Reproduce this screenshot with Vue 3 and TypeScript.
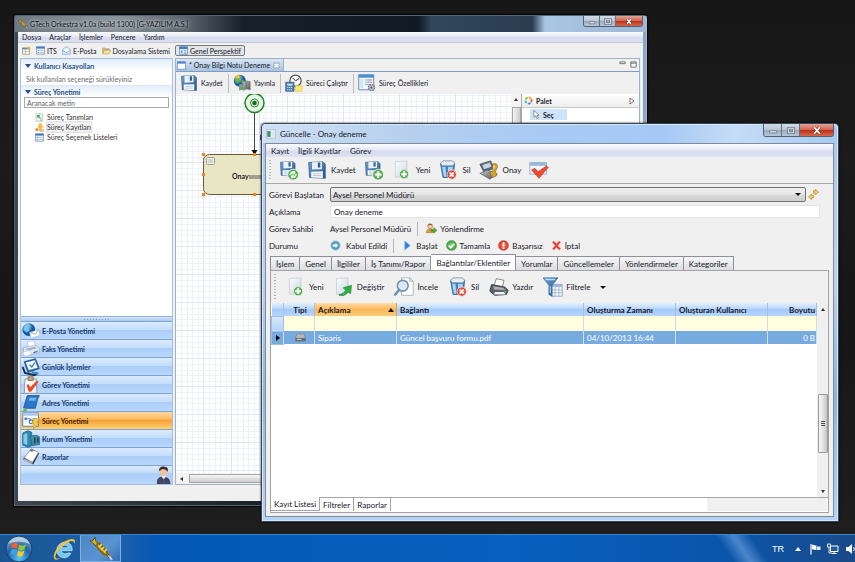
<script setup lang="ts">
import { ref } from 'vue'

interface Item {
  id: string
  label: string
  icon: string
}

const mainMenu: string[] = ['Dosya', 'Araçlar', 'İşlemler', 'Pencere', 'Yardım']
const perspectives: Item[] = [
  { id: 'its', label: 'ITS', icon: 'view' },
  { id: 'mail', label: 'E-Posta', icon: 'mail' },
  { id: 'files', label: 'Dosyalama Sistemi', icon: 'folder' },
]
const processTree: Item[] = [
  { id: 'defs', label: 'Süreç Tanımları', icon: 'definition' },
  { id: 'records', label: 'Süreç Kayıtları', icon: 'records' },
  { id: 'lists', label: 'Süreç Seçenek Listeleri', icon: 'view' },
]
const modules: Item[] = [
  { id: 'mail', label: 'E-Posta Yönetimi', icon: 'globemail' },
  { id: 'fax', label: 'Faks Yönetimi', icon: 'fax' },
  { id: 'daily', label: 'Günlük İşlemler', icon: 'daily' },
  { id: 'task', label: 'Görev Yönetimi', icon: 'task' },
  { id: 'address', label: 'Adres Yönetimi', icon: 'book' },
  { id: 'process', label: 'Süreç Yönetimi', icon: 'process' },
  { id: 'company', label: 'Kurum Yönetimi', icon: 'building' },
  { id: 'reports', label: 'Raporlar', icon: 'reports' },
]
const editorTools: Item[] = [
  { id: 'save', label: 'Kaydet', icon: 'save' },
  { id: 'publish', label: 'Yayınla', icon: 'publish' },
  { id: 'run', label: 'Süreci Çalıştır', icon: 'clock' },
  { id: 'props', label: 'Süreç Özellikleri', icon: 'tablegear' },
]
const dialogMenu: string[] = ['Kayıt', 'İlgili Kayıtlar', 'Görev']
const statusActions: Item[] = [
  { id: 'start', label: 'Başlat', icon: 'play' },
  { id: 'done', label: 'Tamamla', icon: 'ok' },
  { id: 'fail', label: 'Başarısız', icon: 'alert' },
  { id: 'cancel', label: 'İptal', icon: 'cross' },
]
const tabs: string[] = [
  'İşlem', 'Genel', 'İlgililer', 'İş Tanımı/Rapor', 'Bağlantılar/Eklentiler',
  'Yorumlar', 'Güncellemeler', 'Yönlendirmeler', 'Kategoriler',
]
const attachmentTools: Item[] = [
  { id: 'new', label: 'Yeni', icon: 'pageplus' },
  { id: 'edit', label: 'Değiştir', icon: 'pageedit' },
  { id: 'view', label: 'İncele', icon: 'magnifier' },
  { id: 'delete', label: 'Sil', icon: 'bin' },
  { id: 'print', label: 'Yazdır', icon: 'printer' },
  { id: 'filter', label: 'Filtrele', icon: 'filter' },
]
const bottomTabs: string[] = ['Kayıt Listesi', 'Filtreler', 'Raporlar']

const activeModule = ref('process')
const activeTab = ref('Bağlantılar/Eklentiler')
const activeBottom = ref('Kayıt Listesi')
const search = ref('')
const owner = ref('Aysel Personel Müdürü')
const description = ref('Onay deneme')
</script>

<template>
  <div class="screen">
    <svg class="sprite" aria-hidden="true">
      <defs>
        <linearGradient id="g-blue" x1="0" y1="0" x2="1" y2="1">
          <stop offset="0" stop-color="#6fa0d0" /><stop offset="1" stop-color="#24538c" />
        </linearGradient>
        <linearGradient id="g-paper" x1="0" y1="0" x2="1" y2="1">
          <stop offset="0" stop-color="#fdfeff" /><stop offset="1" stop-color="#c9d5e0" />
        </linearGradient>
        <linearGradient id="g-metal" x1="0" y1="0" x2="1" y2="1">
          <stop offset="0" stop-color="#c4c8cc" /><stop offset="1" stop-color="#4c5258" />
        </linearGradient>
        <radialGradient id="g-green"><stop offset="0" stop-color="#8be07c" /><stop offset="1" stop-color="#3a9b3c" /></radialGradient>
        <radialGradient id="g-red"><stop offset="0" stop-color="#ff8a72" /><stop offset="1" stop-color="#d22c1c" /></radialGradient>
        <radialGradient id="g-globe" cx=".35" cy=".3"><stop offset="0" stop-color="#a6e2ff" /><stop offset="1" stop-color="#0c5599" /></radialGradient>
        <radialGradient id="g-orb" cx=".5" cy=".85" r=".9"><stop offset="0" stop-color="#56c8f5" /><stop offset=".5" stop-color="#1c62a8" /><stop offset="1" stop-color="#a4bdd6" /></radialGradient>
      </defs>

      <symbol id="save" viewBox="0 0 24 24">
        <path d="M2 3 19 2l3 3v17L3 21z" fill="url(#g-blue)" stroke="#2c5687" stroke-width=".8" />
        <path d="M6 2.600 18 2v9L6 11.500z" fill="#e9f0f7" /><path d="M13 3h3v6h-3z" fill="#35608f" />
        <path d="M5 14l14-.4v8L5 21z" fill="#f6f9fc" /><path d="M7 16.500h10M7 18.800h10" stroke="#a8bccf" />
      </symbol>
      <symbol id="saverefresh" viewBox="0 0 24 24">
        <use href="#save" width="21" height="21" /><circle cx="17" cy="17.500" r="6.500" fill="url(#g-green)" stroke="#fff" />
        <path d="M13.500 18a3.600 3.600 0 0 1 6-2.700M20.500 17a3.600 3.600 0 0 1-6 2.900" fill="none" stroke="#fff" stroke-width="1.700" />
        <path d="M19 12.800v3.600h-3.600zM14.500 22.200v-3.600h3.600z" fill="#fff" />
      </symbol>
      <symbol id="saveplus" viewBox="0 0 24 24">
        <use href="#save" width="21" height="21" /><circle cx="17" cy="17.500" r="6.500" fill="url(#g-green)" stroke="#fff" />
        <path d="M17 13.500v8M13 17.500h8" stroke="#fff" stroke-width="2.400" />
      </symbol>
      <symbol id="pageplus" viewBox="0 0 24 24">
        <path d="M4 2 18 1v18L4 21z" fill="url(#g-paper)" stroke="#b7c3ce" stroke-width=".7" />
        <circle cx="14.500" cy="17" r="5.500" fill="url(#g-green)" stroke="#e9f7e6" /><path d="M14.500 13.500v7M11 17h7" stroke="#fff" stroke-width="2.400" />
      </symbol>
      <symbol id="pageedit" viewBox="0 0 24 24">
        <path d="M3 2 17 1v18L3 21z" fill="url(#g-paper)" stroke="#b7c3ce" stroke-width=".7" />
        <path d="M6 21c4 0 6-2 8-5l-3-3 10-3-1 10-3-2c-3 4-6 5-11 4z" fill="#2fae49" stroke="#1b8433" stroke-width=".7" />
      </symbol>
      <symbol id="bin" viewBox="0 0 24 24">
        <path d="M3 4h17l-2 17H6z" fill="#3f83c6" stroke="#3a6696" /><path d="M5 8h4l1 12H7zM12 8h6l-2 11h-4z" fill="#a8d3f2" />
        <path d="M3 4l3-3h11l3 3-2 3H5z" fill="#e6edf3" stroke="#62788d" stroke-width=".8" />
        <circle cx="16.500" cy="17.500" r="5.500" fill="url(#g-red)" stroke="#ffdfd8" /><path d="M14 15l5 5M19 15l-5 5" stroke="#fff" stroke-width="2" />
      </symbol>
      <symbol id="stamp" viewBox="0 0 24 24">
        <path d="M1 5 14 1l4 9-12 5z" fill="#56687a" stroke="#37434f" stroke-width=".7" /><path d="M4 6 13 3l2 5-9 3z" fill="#c7d4e1" />
        <path d="M1 16l9-4 12 5-9 6z" fill="url(#g-metal)" stroke="#50565d" stroke-width=".7" />
        <path d="M16 5c4-2 7 0 6 4l-2 4 1 6-5 2-3-5 4-4z" fill="#d2a332" stroke="#80611c" stroke-width=".7" /><path d="M17 7c1-1 3 0 2 2l-2 3z" fill="#f7df8f" />
      </symbol>
      <symbol id="approve" viewBox="0 0 24 24">
        <path d="M1 3h20v14H1z" fill="#f4f7fb" stroke="#8ea5c4" /><path d="M1 3h20v4H1z" fill="#9db9df" />
        <path d="M3 12l4-2 4 4 10-7 2 2-11 13z" fill="#ee4b30" stroke="#c2321d" stroke-width=".7" />
      </symbol>
      <symbol id="magnifier" viewBox="0 0 24 24">
        <path d="M9 1h10l4 4v17H9z" fill="#fff" stroke="#8d9aa8" stroke-width=".8" /><path d="M19 1v4h4" fill="none" stroke="#8d9aa8" />
        <circle cx="10.500" cy="10.500" r="6.500" fill="#d3ebfd" stroke="#7f93a6" stroke-width="2" /><path d="M6 15.500 1.500 21" stroke="#6d8db5" stroke-width="3" stroke-linecap="round" />
      </symbol>
      <symbol id="printer" viewBox="0 0 24 24">
        <path d="M9 2l9 2-2 8-10-2z" fill="#fff" stroke="#6b7279" /><path d="M3 9l16 3 4 4-2 5-14 1-6-5z" fill="#5b6167" stroke="#33383d" />
        <path d="M5 11l12 2 3 3-14-1z" fill="#a8aeb4" /><path d="M7 18h11l2 3H6z" fill="#eef1f4" /><circle cx="19.500" cy="18" r="1.200" fill="#53c14d" />
      </symbol>
      <symbol id="filter" viewBox="0 0 24 24">
        <path d="M10 9h13v14H10z" fill="#fff" stroke="#7896bd" /><path d="M10 9h13v3H10z" fill="#9bb9e2" /><path d="M10 15.500h13M10 19h13M14.500 12v11M19 12v11" stroke="#93abc9" />
        <path d="M0 1h18l-7 9v13l-4-2V10z" fill="url(#g-blue)" stroke="#2a66a5" stroke-width=".7" /><path d="M2 2h13l-1 2H4z" fill="#b9def8" /><path d="M8 11h1.500v9L8 19z" fill="#9fd0f4" />
      </symbol>
      <symbol id="publish" viewBox="0 0 24 24">
        <circle cx="9" cy="9" r="8" fill="url(#g-globe)" /><path d="M3 5c3-4 7-3 8-1l-3 3 1 3-3 3-3-4zM12 8l4 1-2 5-3-2z" fill="#6db335" /><path d="M2 3l5-2 3 3-4 3z" fill="#f4bf32" />
        <path d="M13 11l4-2 1 11-4 2zM17 9l6 1v11l-5-1z" fill="url(#g-metal)" stroke="#5a6065" stroke-width=".5" /><path d="M8 14l5-1v8l-5 1z" fill="#8d9499" /><circle cx="12" cy="19" r="2" fill="#4bb13f" />
      </symbol>
      <symbol id="clock" viewBox="0 0 24 24">
        <circle cx="14" cy="9" r="7.500" fill="#fbfbf9" stroke="#4e4e4e" stroke-width="1.600" /><path d="M10 5l4 4 5-3" fill="none" stroke="#333" stroke-width="1.300" />
        <path d="M14 15l9 1-1 8-8-1z" fill="#f6e96a" stroke="#d0bc35" stroke-width=".6" /><path d="M1 11h11v12H1z" fill="#5381b3" stroke="#345b88" /><path d="M3 13h7v2.500H3z" fill="#cfe6f7" /><path d="M3 18h7M3 21h7" stroke="#d9e7f5" stroke-dasharray="1.500 1" stroke-width="1.500" />
      </symbol>
      <symbol id="tablegear" viewBox="0 0 24 24">
        <path d="M1 1h20v20H1z" fill="#f7fbff" stroke="#4c83bd" stroke-width="1.200" /><path d="M1 1h20v4H1z" fill="#4c8fd4" />
        <path d="M3 7h4v12H3z" fill="#cfe2f6" /><path d="M9 8h10M9 11h10M9 14h8" stroke="#85b0de" stroke-width="1.500" /><path d="M13 8h5M13 11h5" stroke="#f08a70" stroke-width="1.500" stroke-dasharray="2 1" />
        <circle cx="18" cy="18" r="4" fill="#bfc3c7" stroke="#777c81" stroke-width="2" stroke-dasharray="2 1.100" /><circle cx="18" cy="18" r="1.500" fill="#5f656a" />
      </symbol>
      <symbol id="view" viewBox="0 0 24 24">
        <path d="M1 2h22v20H1z" fill="#f8fbff" stroke="#56729c" stroke-width="1.600" /><path d="M1 2h22v5H1z" fill="#3f78c4" /><path d="M4 10h5v3H4zM4 16h5v3H4z" fill="#6f9cd8" /><path d="M11 11.500h10M11 17.500h10" stroke="#8aa4c8" stroke-width="2" />
      </symbol>
      <symbol id="blank" viewBox="0 0 24 24">
        <path d="M1 2h22v20H1z" fill="#fff" stroke="#5583bd" stroke-width="2" /><path d="M1 2h22v5H1z" fill="#4a86d2" />
      </symbol>
      <symbol id="newview" viewBox="0 0 24 24">
        <path d="M1 5h19v17H1z" fill="#fffdf4" stroke="#7d7252" stroke-width="1.600" /><path d="M1 5h19v4H1z" fill="#5c86bd" /><path d="M9 9v13M1 15h19" stroke="#9a9587" stroke-width="1.400" /><path d="M18 1v9M13.500 5.500h9" stroke="#e7b127" stroke-width="3" />
      </symbol>
      <symbol id="mail" viewBox="0 0 24 24">
        <path d="M1 10 12 1l11 9v12H1z" fill="#d5e7fa" stroke="#5a91cf" stroke-width="1.400" /><path d="M5 6h14v8l-7 4-7-4z" fill="#fff" stroke="#a2bfdf" /><path d="M1 11l11 7 11-7" fill="none" stroke="#5a91cf" stroke-width="1.500" />
      </symbol>
      <symbol id="folder" viewBox="0 0 24 24">
        <path d="M1 5h7l2 2h9v4H7L2 20z" fill="#e8bf58" stroke="#a4822f" /><path d="M9 8h11v6H9z" fill="#7fb0e6" /><path d="M6 11h17l-4 10H2z" fill="#fbe596" stroke="#a4822f" stroke-width="1.200" />
      </symbol>
      <symbol id="definition" viewBox="0 0 24 24">
        <path d="M3 2h17v20H3z" fill="#f5fbf5" stroke="#8aa598" stroke-width="1.400" /><path d="M6 5v9l3-3 5 5 2-2-5-5 3-4z" fill="#2d9c4b" /><path d="M13 19h5" stroke="#7c8fa8" stroke-width="2" />
      </symbol>
      <symbol id="records" viewBox="0 0 24 24">
        <circle cx="5" cy="17" r="4" fill="#ef7c42" /><path d="M12 1l7 2-3 6h6L11 20l2-8H8z" fill="#fbc62f" stroke="#cc8c16" /><path d="M13 17h10v6H13z" fill="#f0d37c" stroke="#b58c2c" />
      </symbol>
      <symbol id="processsmall" viewBox="0 0 24 24">
        <path d="M1 2h22v20H1z" fill="#d8e9fa" stroke="#3c6ba4" stroke-width="1.600" /><path d="M1 2h22v6H1z" fill="#3d7ac6" /><path d="M5 12h4v6H5zM14 11h5v3h-5zM14 17h5v3h-5z" fill="#5e8dc7" />
      </symbol>
      <symbol id="globemail" viewBox="0 0 24 24">
        <circle cx="9" cy="10" r="8.500" fill="url(#g-globe)" /><path d="M4 5c3-3 6-2 7 0L8 8l2 3-4 3-4-4z" fill="#7cc7e8" /><path d="M10 14l12-4 2 8-12 4z" fill="#f7f8fa" stroke="#9aa6b3" stroke-width=".7" /><path d="M10 14l8 2 4-6" fill="none" stroke="#9aa6b3" />
      </symbol>
      <symbol id="fax" viewBox="0 0 24 24">
        <path d="M7 2l9-1 2 8-9 2z" fill="#fff" stroke="#a6b1be" stroke-width=".7" /><path d="M2 10l16-3 5 4v6L8 21l-6-4z" fill="#e3e9f1" stroke="#8d9bb0" stroke-width=".7" /><path d="M4 12l13-3 3 2-11 3z" fill="#9fb0c6" /><path d="M0 17l9-3 4 5-8 3z" fill="#fff" stroke="#a6b1be" stroke-width=".7" /><path d="M15 16l6-2v2l-6 2z" fill="#4b78b8" />
      </symbol>
      <symbol id="daily" viewBox="0 0 24 24">
        <path d="M3 5 18 1l5 13-15 5z" fill="#2b6fbb" stroke="#173f70" /><path d="M5 6 17 3l4 10-12 3z" fill="#f7fafe" /><path d="M10 9l3 3 4-6" fill="none" stroke="#3779c2" stroke-width="1.800" /><path d="M1 12l3 8 13 3 3-3" fill="none" stroke="#182c47" stroke-width="2.500" /><path d="M13 19l9 2" stroke="#2f89d9" stroke-width="3" />
      </symbol>
      <symbol id="task" viewBox="0 0 24 24">
        <path d="M4 4h15l1 19H3z" fill="#fafafa" stroke="#8293a8" stroke-width="1.200" /><path d="M8 1h7v5H8z" fill="#c5a77a" stroke="#7c6340" /><path d="M6 12l3-1 2 4 9-9 2 2-10 13H9z" fill="#e84d2b" />
      </symbol>
      <symbol id="book" viewBox="0 0 24 24">
        <path d="M7 2h16l-5 17H2z" fill="#2b78cb" stroke="#174a87" /><path d="M2 19l1 3h16l4-17" fill="none" stroke="#c7d9ea" stroke-width="2" /><path d="M10 5h9l-1 4H9z" fill="#78b3ea" /><circle cx="4" cy="21" r="2.500" fill="#5fbd3f" />
      </symbol>
      <symbol id="process" viewBox="0 0 24 24">
        <path d="M1 1h21v18H1z" fill="#f6f9fe" stroke="#4f7fbb" stroke-width="1.200" /><path d="M1 1h21v4H1z" fill="#aac9ee" /><circle cx="5" cy="9" r="2" fill="#6287ba" /><circle cx="12" cy="13" r="2.500" fill="none" stroke="#426fac" stroke-width="1.400" /><path d="M7 9h4v3M14 9h5" stroke="#426fac" fill="none" /><path d="M16 9h7l-3 5h3l-8 9 1-7h-3z" fill="#f9c83c" stroke="#bf8f1e" stroke-width=".7" />
      </symbol>
      <symbol id="building" viewBox="0 0 24 24">
        <path d="M1 4l7-3 5 2v18l-5 2-7-3z" fill="#2d89b4" stroke="#1b5a7d" /><path d="M2 6l5-2v16l-5-2z" fill="#86cbe0" /><path d="M11 8l9-1 4 3v9l-10 2z" fill="#458fae" stroke="#285d77" /><path d="M16 10h2v8h-2zM20 10h2v7h-2z" fill="#1f4056" />
      </symbol>
      <symbol id="reports" viewBox="0 0 24 24">
        <path d="M1 15 12 3l11 4-8 15z" fill="#30353b" /><path d="M3 13 12 1l10 5-8 13z" fill="#fff" stroke="#808890" /><path d="M10 3l4-2 2 3-4 1z" fill="#6e747b" /><path d="M2 15l12 5" stroke="#a9b3bd" stroke-width="2" />
      </symbol>
      <symbol id="person" viewBox="0 0 24 24">
        <path d="M4 24c-1-7 3-10 8-10s10 3 10 10z" fill="#3e466a" /><path d="M10 14l3 4 3-4-1-3h-4z" fill="#f3f1ef" /><ellipse cx="12.500" cy="7.500" rx="5" ry="6" fill="#eec39c" /><path d="M7 7c-1-5 3-7 7-6 5 0 5 4 4 7-1-3-4-4-7-4z" fill="#3a2e28" /><path d="M13 17v6" stroke="#7d4a52" stroke-width="1.400" />
      </symbol>
      <symbol id="forward" viewBox="0 0 24 24">
        <path d="M1 21c0-6 3-8 8-8s8 2 8 8z" fill="#e59a39" stroke="#a0611a" /><circle cx="9" cy="7" r="5.500" fill="#f3ce9f" stroke="#935f27" /><path d="M4 6c0-6 10-6 10 0-3-2-6-2-10 0z" fill="#8f5723" /><path d="M11 14h6v-4l7 6-7 6v-4h-6z" fill="#50ad3d" stroke="#2b7622" />
      </symbol>
      <symbol id="state" viewBox="0 0 24 24">
        <circle cx="12" cy="12" r="10" fill="#4d9cbb" stroke="#8fbdd0" stroke-width="2" /><path d="M12 6l6 6-6 6v-4H6v-4h6z" fill="#fff" />
      </symbol>
      <symbol id="play" viewBox="0 0 24 24"><path d="M6 2l12 10L6 22z" fill="#2f7ee0" stroke="#78b2f4" /></symbol>
      <symbol id="ok" viewBox="0 0 24 24"><circle cx="12" cy="12" r="11" fill="url(#g-green)" stroke="#3f8f3e" /><path d="M6 12l4 5 8-9" fill="none" stroke="#fff" stroke-width="3.500" /></symbol>
      <symbol id="alert" viewBox="0 0 24 24"><circle cx="12" cy="12" r="11" fill="url(#g-red)" stroke="#d5584a" /><path d="M12 5v9M12 16.500v3" stroke="#fff" stroke-width="4" /></symbol>
      <symbol id="cross" viewBox="0 0 24 24"><path d="M3 5l3-3 6 6 6-6 3 3-6 7 6 7-3 3-6-6-6 6-3-3 6-7z" fill="#ee3d37" stroke="#f27a70" /></symbol>
      <symbol id="link" viewBox="0 0 24 24">
        <path d="M12 9V4h4V1l7 6-7 5V9z" fill="#f6d060" stroke="#a87a12" stroke-width="1.400" /><path d="M12 14v5H8v4l-7-6 7-6v3z" fill="#f6d060" stroke="#a87a12" stroke-width="1.400" />
      </symbol>
      <symbol id="palette" viewBox="0 0 24 24">
        <g fill="none" stroke-width="5"><path d="M12 4a8 8 0 0 1 7 4" stroke="#f3a93b" /><path d="M19.500 9a8 8 0 0 1-2 9" stroke="#e8493a" stroke-dasharray="7 2" /><path d="M17 18.500a8 8 0 0 1-9 1" stroke="#4f88dc" stroke-dasharray="7 2" /><path d="M7 18.500a8 8 0 0 1-3-8" stroke="#38b5c9" stroke-dasharray="7 2" /><path d="M4.500 9a8 8 0 0 1 7-5" stroke="#87c540" stroke-dasharray="7 2" /></g>
      </symbol>
      <symbol id="cursor" viewBox="0 0 24 24"><path d="M5 1v18l5-4 3 8 4-2-4-7h6z" fill="#fff" stroke="#555a44" stroke-width="1.600" /></symbol>
      <symbol id="drive" viewBox="0 0 24 24"><path d="M5 4h14l4 9v7H1v-7z" fill="#b4b8bd" stroke="#666b72" /><path d="M1 13h22v7H1z" fill="#656b73" /><path d="M4 16h10" stroke="#e2e5e8" stroke-width="2" /></symbol>
      <symbol id="appwin" viewBox="0 0 24 24"><path d="M1 2h22v20H1z" fill="#f6f8f8" stroke="#7f8a8f" /><path d="M3 5h8v14H3z" fill="#3b8f74" /><path d="M13 5h8v14h-8z" fill="#dbe6ec" /></symbol>
      <symbol id="trumpet" viewBox="0 0 24 24">
        <path d="M1 4c2 0 4-1 5-4 0 3 1 5 3 6l12 13-1 2L6 8C4 6 3 5 1 4z" fill="#d8ad22" stroke="#514006" stroke-width=".8" /><path d="M8 7l3-1 7 8v4l-4-1-6-7z" fill="none" stroke="#846609" stroke-width="1.500" /><path d="M10 10l3-3M12 13l3-3M15 15l3-3" stroke="#f9df6e" stroke-width="1.400" /><path d="M20 19l3 4" stroke="#c8ced5" stroke-width="2" />
      </symbol>
      <symbol id="orb" viewBox="0 0 28 28">
        <circle cx="14" cy="14" r="13" fill="url(#g-orb)" stroke="#183f70" /><path d="M7 9c2-1.500 4-1.500 6 0l-1 5c-2-1.500-4-1.500-6 0z" fill="#f2602d" /><path d="M14 9.500c2 1.500 4.500 1.500 7 0l-1.500 5c-2 1.500-4.500 1.500-6.500 0z" fill="#8ac63b" /><path d="M6 15c2-1.500 4-1.500 6 0l-1 5c-2-1.500-4-1.500-6 0z" fill="#3fa2e8" /><path d="M13 15.500c2 1.500 4.500 1.500 6.500 0l-1.500 5c-2 1.500-4 1.500-6 0z" fill="#fbc92f" />
        <path d="M3 9c4-9 18-9 22 0-6-3-16-3-22 0z" fill="#fff" opacity=".5" />
      </symbol>
      <symbol id="ie" viewBox="0 0 28 28">
        <path d="M22 19c-2 4-6 6-9 5-6-1-8-6-7-11 1-4 5-7 9-7 6 0 9 4 8.500 10H11c0 3 5 5 8 2.500zM11 12.500h8c-.5-4-7-4-8 0z" fill="#6cc9f6" stroke="#e8f8ff" stroke-width=".7" fill-rule="evenodd" />
        <path d="M3 26C-1 21 8 7 20 3c6-2 8 0 6 5 0-4-3-4-7-2C11 10 3 19 4 24c1 2 4 1 6 0-3 3-6 3-7 2z" fill="#f6c331" />
      </symbol>
      <symbol id="flag" viewBox="0 0 24 24"><path d="M4 2v21" stroke="#fff" stroke-width="2.500" /><path d="M6 4c4-2 6 2 9 1v9c-4 1-6-3-9-1z" fill="#fff" /><path d="M16 7h7v7h-7z" fill="#e3ebf5" /></symbol>
      <symbol id="network" viewBox="0 0 24 24"><path d="M7 6h15v11H7z" fill="#24569b" stroke="#fff" stroke-width="2" /><path d="M10 21h9M14 17v4" stroke="#fff" stroke-width="2" /><path d="M1 2h6v6H1zM4 8v12h6" fill="none" stroke="#dfe7f2" stroke-width="2" /></symbol>
      <symbol id="sound" viewBox="0 0 24 24"><path d="M2 8h5l7-6v20l-7-6H2z" fill="#fff" /><path d="M17 8c2 3 2 5 0 8M20 5c4 5 4 9 0 14" fill="none" stroke="#fff" stroke-width="2" /></symbol>
    </svg>

    <main class="wallpaper">
      <section class="win main-win" aria-label="GTech Orkestra">
        <header class="titlebar main-title">
          <svg class="i10"><use href="#trumpet" /></svg>
          <h1 class="glow">GTech Orkestra v1.0a (build 1300) [G-YAZILIM A.S.]</h1>
          <div class="winbtns">
            <button type="button" aria-label="Simge durumuna küçült"><svg viewBox="0 0 18 11"><path d="M6 6h6v2H6z" fill="#fff" stroke="#596273" stroke-width=".7" /></svg></button>
            <button type="button" aria-label="Ekranı kapla"><svg viewBox="0 0 18 11"><path d="M6 3h6v5H6z" fill="none" stroke="#596273" stroke-width="2.500" /><path d="M6 3h6v5H6z" fill="none" stroke="#fff" /></svg></button>
            <button type="button" class="close" aria-label="Kapat"><svg viewBox="0 0 18 11"><path d="M7 3l4 5M11 3L7 8" stroke="#5c2a2a" stroke-width="3" /><path d="M7 3l4 5M11 3L7 8" stroke="#fff" stroke-width="1.700" /></svg></button>
          </div>
        </header>
        <div class="main-body">
          <nav class="menubar">
            <button v-for="m in mainMenu" :key="m" type="button">{{ m }}</button>
          </nav>
          <div class="perspectives">
            <button type="button" aria-label="Perspektif aç"><svg class="i9"><use href="#newview" /></svg></button>
            <button v-for="p in perspectives" :key="p.id" type="button"><svg class="i9"><use :href="'#' + p.icon" /></svg>{{ p.label }}</button>
            <button type="button" class="pressed"><svg class="i9"><use href="#processsmall" /></svg>Genel Perspektif</button>
          </div>
          <div class="workbench">
            <aside class="sidebar">
              <h2 class="fold">Kullanıcı Kısayolları</h2>
              <p class="hint">Sık kullanılan seçeneği sürükleyiniz</p>
              <h2 class="fold">Süreç Yönetimi</h2>
              <input v-model="search" class="search" type="text" placeholder="Aranacak metin" aria-label="Aranacak metin" />
              <ul class="tree">
                <li v-for="t in processTree" :key="t.id">
                  <button type="button" :class="{ hot: t.id === 'records' }"><svg class="i9"><use :href="'#' + t.icon" /></svg><span>{{ t.label }}</span></button>
                </li>
              </ul>
              <div class="sash"></div>
              <nav class="modules">
                <button v-for="m in modules" :key="m.id" type="button" :class="{ active: m.id === activeModule }" @click="activeModule = m.id">
                  <svg class="i18"><use :href="'#' + m.icon" /></svg>{{ m.label }}
                </button>
              </nav>
              <div class="overflow"><svg class="i18"><use href="#person" /></svg></div>
            </aside>

            <section class="editor">
              <div class="editor-tabs">
                <div class="editor-tab"><svg class="i9"><use href="#blank" /></svg>* Onay Bilgi Notu Deneme<button type="button" aria-label="Sekmeyi kapat"><svg class="i7" viewBox="0 0 8 8"><path d="M1 1h2l1 1 1-1h2v2L6 4l1 1v2H5L4 6 3 7H1V5l1-1-1-1z" fill="#f4f6f8" stroke="#77808a" stroke-width=".7" /></svg></button></div>
                <div class="pane-btns">
                  <svg viewBox="0 0 8 8"><path d="M1 1h6v2H1z" fill="#fff" stroke="#666" /></svg>
                  <svg viewBox="0 0 8 8"><path d="M1 1h6v6H1zM1 2.500h6" fill="#fff" stroke="#666" /></svg>
                </div>
              </div>
              <div class="editor-tools">
                <button v-for="t in editorTools" :key="t.id" type="button"><svg class="i18"><use :href="'#' + t.icon" /></svg>{{ t.label }}</button>
              </div>
              <div class="editor-area">
                <div class="canvas">
                  <svg width="100%" height="100%">
                    <defs>
                      <pattern id="grid" width="28" height="28" patternUnits="userSpaceOnUse">
                        <path d="M5.500 0v28M11.500 0v28M16.500 0v28M22.500 0v28M0 1.500h28M0 7.500h28M0 18.500h28M0 24.500h28" stroke="#edf2f9" />
                        <path d="M27.500 0v28M0 12.500h28" stroke="#dde8f4" />
                      </pattern>
                    </defs>
                    <rect width="100%" height="100%" fill="url(#grid)" />
                    <circle cx="78.500" cy="9" r="9.500" fill="#e8f4e6" stroke="#168a1c" stroke-width="1.500" />
                    <circle cx="78.500" cy="9" r="4" fill="none" stroke="#2b7f2e" /><circle cx="78.500" cy="9" r="2.300" fill="#0f6f16" />
                    <path d="M78.500 19v38" stroke="#444" /><path d="M75.500 56h6l-3 5z" fill="#111" />
                    <path d="M85 41v5" stroke="#222" stroke-width="1.500" />
                    <rect x="27.500" y="60.500" width="101" height="40" rx="6" fill="#e8e6c4" stroke="#6f5631" />
                    <rect x="30.500" y="63.500" width="8" height="7" rx="1" fill="#f2f2ec" stroke="#999a90" /><path d="M32 66h5M32 68h5" stroke="#b4b4ac" />
                    <text class="node" x="56" y="85">Onay</text><path d="M73 82h20M73 84h20" stroke="#5b5a4c" stroke-width="1.200" />
                    <g fill="#f58220"><path d="M26 59h3v3h-3zM26 79h3v3h-3zM26 99h3v3h-3zM77 59h3v3h-3zM77 99h3v3h-3z" /></g>
                  </svg>
                  <div class="vscroll"><span class="up"></span><span class="thumb"></span></div>
                  <div class="hscroll"><span class="left"></span><span class="thumb"></span></div>
                </div>
                <div class="palette">
                  <h2><svg class="i9"><use href="#palette" /></svg>Palet<svg class="expand" viewBox="0 0 6 8"><path d="M1 1l4 3-4 3z" fill="#fff" stroke="#555" stroke-width=".8" /></svg></h2>
                  <button type="button"><svg class="i9"><use href="#cursor" /></svg>Seç</button>
                </div>
              </div>
            </section>
          </div>
        </div>
      </section>

      <section class="win dialog" aria-label="Güncelle - Onay deneme">
        <header class="titlebar dlg-title">
          <svg class="i10"><use href="#appwin" /></svg>
          <h1>Güncelle - Onay deneme</h1>
          <div class="winbtns">
            <button type="button" aria-label="Simge durumuna küçült"><svg viewBox="0 0 18 11"><path d="M5 6h8v2H5z" fill="#fff" stroke="#596273" stroke-width=".7" /></svg></button>
            <button type="button" aria-label="Ekranı kapla"><svg viewBox="0 0 18 11"><path d="M6 3h6v5H6z" fill="none" stroke="#596273" stroke-width="2.500" /><path d="M6 3h6v5H6z" fill="none" stroke="#fff" /></svg></button>
            <button type="button" class="close" aria-label="Kapat"><svg viewBox="0 0 18 11"><path d="M6 2l6 7M12 2L6 9" stroke="#5c2a2a" stroke-width="3" /><path d="M6 2l6 7M12 2L6 9" stroke="#fff" stroke-width="1.800" /></svg></button>
          </div>
        </header>
        <div class="dlg-body">
          <nav class="menubar">
            <button v-for="m in dialogMenu" :key="m" type="button">{{ m }}</button>
          </nav>
          <div class="dlg-tools">
            <span class="grip"></span>
            <button type="button" aria-label="Kaydet ve yenile"><svg class="i20"><use href="#saverefresh" /></svg></button>
            <button type="button"><svg class="i20"><use href="#save" /></svg>Kaydet</button>
            <button type="button" aria-label="Kaydet ve yeni"><svg class="i20"><use href="#saveplus" /></svg></button>
            <button type="button"><svg class="i20"><use href="#pageplus" /></svg>Yeni</button>
            <button type="button"><svg class="i20"><use href="#bin" /></svg>Sil</button>
            <button type="button"><svg class="i20"><use href="#stamp" /></svg>Onay</button>
            <button type="button" aria-label="Onayla"><svg class="i20"><use href="#approve" /></svg></button>
          </div>
          <form class="form" @submit.prevent>
            <label for="owner">Görevi Başlatan</label>
            <div class="line">
              <select id="owner" v-model="owner"><option>Aysel Personel Müdürü</option></select>
              <button type="button" aria-label="Kayda git"><svg class="i11"><use href="#link" /></svg></button>
            </div>
            <label for="desc">Açıklama</label>
            <div class="line"><input id="desc" v-model="description" type="text" /></div>
            <span>Görev Sahibi</span>
            <div class="line">
              <span>Aysel Personel Müdürü</span><i class="rule"></i>
              <button type="button"><svg class="i11"><use href="#forward" /></svg>Yönlendirme</button>
            </div>
            <span>Durumu</span>
            <div class="line">
              <span class="state"><svg class="i11"><use href="#state" /></svg>Kabul Edildi</span><i class="rule"></i>
              <button v-for="a in statusActions" :key="a.id" type="button"><svg class="i11"><use :href="'#' + a.icon" /></svg>{{ a.label }}</button>
            </div>
          </form>
          <div class="tabs" role="tablist">
            <button v-for="t in tabs" :key="t" type="button" role="tab" :aria-selected="t === activeTab" :class="{ active: t === activeTab }" @click="activeTab = t">{{ t }}</button>
          </div>
          <div class="panel">
            <div class="att-tools">
              <span class="grip"></span>
              <button v-for="t in attachmentTools" :key="t.id" type="button"><svg class="i20"><use :href="'#' + t.icon" /></svg>{{ t.label }}</button>
              <i class="caret"></i>
            </div>
            <div class="records">
              <div class="table-wrap">
                <table>
                  <colgroup><col class="c-mark" /><col class="c-type" /><col class="c-desc" /><col /><col class="c-date" /><col class="c-date" /><col class="c-size" /></colgroup>
                  <thead>
                    <tr><th></th><th class="center">Tipi</th><th class="sorted">Açıklama</th><th>Bağlantı</th><th>Oluşturma Zamanı</th><th>Oluşturan Kullanıcı</th><th class="right">Boyutu</th></tr>
                  </thead>
                  <tbody>
                    <tr class="filters"><td class="mark"></td><td></td><td></td><td></td><td></td><td></td><td></td></tr>
                    <tr class="selected">
                      <td class="mark"><i class="pointer"></i></td><td class="center"><svg class="i11"><use href="#drive" /></svg></td>
                      <td>Siparis</td><td>Güncel başvuru formu.pdf</td><td>04/10/2013 16:44</td><td></td><td class="right">0 B</td>
                    </tr>
                  </tbody>
                </table>
              </div>
              <div class="vbar"><span class="up"></span><span class="thumb"></span><span class="down"></span></div>
            </div>
            <div class="bottom-tabs" role="tablist">
              <button v-for="b in bottomTabs" :key="b" type="button" role="tab" :aria-selected="b === activeBottom" :class="{ active: b === activeBottom }" @click="activeBottom = b">{{ b }}</button>
              <span class="filler"></span>
            </div>
          </div>
        </div>
      </section>
    </main>

    <footer class="taskbar">
      <button type="button" class="start" aria-label="Başlat"><svg class="i28"><use href="#orb" /></svg></button>
      <button type="button" class="pin" aria-label="Internet Explorer"><svg class="i24"><use href="#ie" /></svg></button>
      <button type="button" class="pin running" aria-label="GTech Orkestra"><svg class="i24"><use href="#trumpet" /></svg></button>
      <div class="tray">
        <span>TR</span><i class="chevron"></i>
        <svg class="i12"><use href="#flag" /></svg><svg class="i12"><use href="#network" /></svg><svg class="i12"><use href="#sound" /></svg>
      </div>
    </footer>
  </div>
</template>

<style>
body {
  background: #191919;
  overflow: hidden;
}
</style>

<style scoped>
.screen {
  display: grid;
  grid-template-rows: 1fr 28px;
  height: 100vh;
  font: 7px/10px Lato, 'Open Sans', sans-serif;
  color: #15151f;
}
.screen *, .screen *::before, .screen *::after { box-sizing: border-box; }
.sprite { position: absolute; width: 0; height: 0; }
h1, h2, p, ul { margin: 0; padding: 0; font: inherit; list-style: none; }
button { display: flex; align-items: center; margin: 0; padding: 0; border: 0; background: none; color: inherit; font: inherit; white-space: nowrap; }
svg { display: block; flex: none; }
.i7 { width: 7px; height: 7px; }
.i9 { width: 9px; height: 9px; }
.i10 { width: 10px; height: 10px; }
.i11 { width: 11px; height: 11px; }
.i12 { width: 12px; height: 12px; }
.i18 { width: 18px; height: 18px; }
.i20 { width: 20px; height: 20px; }
.i24 { width: 24px; height: 24px; }
.i28 { width: 28px; height: 28px; }

.wallpaper {
  position: relative;
  overflow: hidden;
  background: linear-gradient(#171717, #1b1b1b 30%, #161616 60%, #1e1e1e);
}
.win { position: absolute; display: flex; flex-direction: column; }
.titlebar { display: flex; flex: none; align-items: flex-start; }
.titlebar h1 { flex: 1; white-space: nowrap; }
.winbtns { display: flex; border: 1px solid #55606f; border-top: 0; border-radius: 0 0 3px 3px; overflow: hidden; }
.winbtns button { justify-content: center; border-right: 1px solid #66717f; background: linear-gradient(#d3dde9, #b7c4d4 50%, #98a9be 51%, #b7c8dc); }
.winbtns svg { width: 16px; height: 11px; }
.winbtns .close { border: 0; background: linear-gradient(#e0a59a, #d0604b 50%, #bb2e17 51%, #d6674a); }

.main-win {
  inset: 15px 208px 28px 14px;
  padding: 0 3px 4px;
  border-radius: 3px 3px 0 0;
  background: linear-gradient(90deg, #3d464e, #10171e 50%, #8ba5c4);
  border: 1px solid #5b646e;
  border-right-color: #9fb8d4;
  box-shadow: 0 0 1px 1px #050505;
}
.main-title {
  height: 16px;
  margin: 0 -3px;
  padding: 0 3px 0 3px;
  gap: 2px;
  background: linear-gradient(90deg, #6d7882, #8b949c 16%, #545e68 28%, #17212c 36%, #101a24 64%, #31475e 66%, #2a3c50 82%, #a9c6e4 84%, #9db7d4);
}
.main-title > svg, .main-title h1 { margin-top: 3px; }
.glow { color: #0a0d12; text-shadow: 0 0 3px #dfe6ee, 0 0 5px #c3ccd5; }
.main-title button { width: 16px; height: 10px; }
.main-title .close { width: 26px; }
.main-body { display: flex; flex: 1; flex-direction: column; min-height: 0; padding-bottom: 16px; background: #f0f0f0; }
.menubar { display: flex; flex: none; background: linear-gradient(#fbfcfe, #e8ebf6 40%, #d5dbee 60%, #dde3f3); }
.main-body .menubar { gap: 8px; height: 11px; padding-left: 4px; border-bottom: 1px solid #c3c7d3; }
.perspectives { display: flex; flex: none; align-items: center; gap: 5px; height: 15px; padding-left: 4px; }
.perspectives button { gap: 2px; height: 11px; }
.perspectives .pressed { padding: 0 3px; border: 1px solid #76797d; border-radius: 2px; background: #e3e5e8; }
.workbench { display: grid; flex: 1; grid-template-columns: 153px 1fr; gap: 2px; min-height: 0; padding: 0 3px 0 2px; }

.sidebar { display: flex; flex-direction: column; min-height: 0; border: 1px solid #a7bfdc; background: #fff; color: #333; }
.fold { display: flex; flex: none; align-items: center; gap: 3px; height: 12px; padding-left: 4px; border-top: 1px solid #dce8f5; background: linear-gradient(#e4eefa, #fff); color: #204d89; font-weight: 700; }
.fold::before { content: ''; border: 3px solid transparent; border-top: 4px solid #24508b; border-bottom: 0; }
.hint { flex: none; height: 14px; padding: 3px 0 0 5px; color: #6a6a6a; white-space: nowrap; }
.search { flex: none; height: 11px; margin: 0 3px; padding: 0 2px; border: 1px solid #a5a9ae; background: #fff; font: inherit; color: #333; }
.search::placeholder { color: #5d5d5d; opacity: 1; }
.tree { flex: 1; padding: 4px 0 0 14px; }
.tree button { gap: 3px; height: 10px; padding-right: 2px; }
.tree .hot span { background: #f1f1f1; box-shadow: 0 0 0 1px #e2e2e2; }
.sash { flex: none; height: 5px; background: radial-gradient(circle, #7c93b1 1px, transparent 1px) center / 3px 3px repeat-x, linear-gradient(#d3e4f9, #a9c9f0); background-clip: content-box, border-box; padding: 0 63px; border-top: 1px solid #8fb3de; }
.modules { flex: none; font-weight: 700; color: #15366e; }
.modules button { gap: 2px; width: 100%; height: 18px; padding-left: 1px; border-top: 1px solid #7ba3d6; background: linear-gradient(#dcebfd, #c4dcfb 45%, #abcef8 50%, #b9d7fb); }
.modules .active { background: linear-gradient(#fdd8a0, #fcbd63 40%, #f9a136 50%, #fdd370); color: #3b1c05; }
.overflow { display: flex; flex: none; justify-content: flex-end; height: 19px; border-top: 1px solid #7ba3d6; background: linear-gradient(#dcebfd, #c4dcfb 35%, #abcef8 45%, #b9d7fb); }

.editor { display: flex; flex-direction: column; min-width: 0; min-height: 0; border: 1px solid #9fb1c6; }
.editor-tabs { display: flex; flex: none; justify-content: space-between; height: 13px; border-bottom: 1px solid #7f9dc4; }
.editor-tab { display: flex; align-items: center; gap: 3px; padding: 0 3px 0 1px; border-right: 1px solid #9fb1c6; background: linear-gradient(#dae6f4, #a9c3e1); white-space: nowrap; }
.pane-btns { display: flex; gap: 4px; padding: 2px 2px 0 0; }
.pane-btns svg { width: 7px; height: 7px; }
.editor-tools { display: flex; flex: none; align-items: center; height: 22px; }
.editor-tools button { gap: 3px; height: 19px; padding: 0 5px 0 4px; }
.editor-tools button + button { border-left: 1px solid #bcbcbc; }
.editor-area { display: grid; flex: 1; grid-template-columns: 1fr 118px; min-height: 0; }
.canvas { display: grid; grid-template: minmax(0, 1fr) 11px / minmax(0, 1fr) 10px; overflow: hidden; background: #fff; }
.node { font-size: 7px; font-weight: 700; fill: #1b1b1b; }
.vscroll { display: flex; flex-direction: column; align-items: center; gap: 6px; padding-top: 4px; background: #f3f3f3; }
.vscroll .thumb { width: 9px; height: 200px; border: 1px solid #a6a6a6; background: linear-gradient(90deg, #f6f6f6, #cdcdcf); }
.hscroll { display: flex; align-items: center; gap: 6px; padding-left: 4px; background: #f3f3f3; }
.hscroll .thumb { flex: 1; height: 9px; border: 1px solid #a6a6a6; background: linear-gradient(#f6f6f6, #cdcdcf); }
.up { border: 2px solid transparent; border-top: 0; border-bottom: 3px solid #333; }
.down { border: 2px solid transparent; border-bottom: 0; border-top: 3px solid #333; }
.left { border: 2px solid transparent; border-left: 0; border-right: 3px solid #333; }
.palette { border-left: 1px solid #a9a9a9; background: #fff; font-weight: 700; }
.palette h2 { display: flex; align-items: center; gap: 3px; height: 14px; padding: 0 4px 0 2px; border-bottom: 1px solid #c9c9c9; background: linear-gradient(#fff, #ededed); }
.expand { width: 6px; height: 8px; margin-left: auto; }
.palette button { gap: 2px; width: 37px; height: 11px; margin: 1px 0 0 8px; padding-left: 2px; background: #cfe3fa; }

.dialog {
  inset: 123px 16px 12px 261px;
  padding: 0 4px 4px 3px;
  border: 1px solid #39465a;
  border-radius: 4px 4px 0 0;
  background: linear-gradient(#a8c8ec, #b7d4f5 40%, #8fb2dd 68%, #b4d3f7);
  box-shadow: inset 0 0 0 1px #d7e7fa, 0 0 2px #000;
  font-size: 8px;
}
.dlg-title { gap: 4px; height: 19px; margin: 0 -3px 0 -2px; padding: 1px 3px 0 3px; background: linear-gradient(90deg, #cfe0f5, #b6d0ee 25%, #a9cbf4 45%, #a5c9f5 70%, #c4dcf7 82%, #a7c9f1); box-shadow: inset 0 1px #d7e7fa; border-radius: 4px 4px 0 0; }
.dlg-title > svg, .dlg-title h1 { margin-top: 4px; }
.dlg-title .winbtns { margin-top: -1px; }
.dlg-title button { width: 18px; height: 12px; }
.dlg-title .close { width: 33px; }
.dlg-body { display: flex; flex: 1; flex-direction: column; min-height: 0; padding: 0 4px 3px; border: 1px solid #808b9b; background: #f0f0f0; }
.dlg-body .menubar { gap: 9px; height: 13px; margin: 0 -4px; padding-left: 5px; }
.dlg-tools { display: flex; flex: none; align-items: center; gap: 8px; height: 27px; margin: 0 -4px; padding-left: 3px; border-bottom: 1px solid #a9a9a9; }
.dlg-tools button { gap: 4px; }
.att-tools button { gap: 3px; }
.grip { align-self: stretch; width: 2px; margin: 3px 0; background: repeating-linear-gradient(#b5b5b5 0 1px, transparent 1px 3px); }
.form { display: grid; flex: none; grid-template-columns: 61px 1fr; grid-template-rows: repeat(4, 17px); align-items: center; padding-top: 2px; margin-left: -1px; white-space: nowrap; }
.line { display: flex; align-items: center; min-width: 0; }
.line button { gap: 3px; margin-right: 8px; }
.form select { flex: 1; height: 15px; padding: 0 2px; border: 1px solid #707070; border-radius: 2px; appearance: none; background: linear-gradient(#f1f1f1, #e4e4e4 50%, #d8d8d8 51%, #cfcfcf); color: inherit; font: inherit; }
.line:has(select)::before { content: ''; order: 1; margin: 2px 4px 0 -11px; border: 3px solid transparent; border-top-color: #111; z-index: 1; pointer-events: none; }
.line select + button { order: 2; margin: 0 10px 0 3px; }
.form input { flex: 1; height: 13px; margin-right: 9px; padding: 0 3px; border: 1px solid #e3e3e3; background: #fff; color: inherit; font: inherit; }
.rule { width: 1px; height: 14px; margin: 0 8px 0 6px; background: #b5b5b5; }
.state { display: flex; gap: 5px; align-items: center; }
.tabs { display: flex; flex: none; align-items: flex-end; height: 16px; }
.tabs button { height: 14px; padding: 0 5px; border: 1px solid #8e8e9a; border-left: 0; border-bottom: 0; background: linear-gradient(#f6f6f7, #dcdde0); }
.tabs button:first-child { border-left: 1px solid #8e8e9a; }
.tabs .active { height: 16px; background: #fff; }
.panel { display: flex; flex: 1; flex-direction: column; min-height: 0; border: 1px solid #a1a1a8; }
.att-tools { display: flex; flex: none; align-items: center; gap: 10px; height: 32px; padding-left: 3px; }
.caret { border: 3px solid transparent; border-top-color: #111; border-bottom: 0; }
.records { display: grid; flex: 1; grid-template-columns: 1fr 11px; min-height: 0; background: #fff; }
table { width: 100%; table-layout: fixed; border-collapse: collapse; }
.c-mark { width: 12px; }
.c-type { width: 31px; }
.c-desc { width: 82px; }
.c-date { width: 92px; }
.c-size { width: 49px; }
th, td { height: 13px; padding: 0 1px 0 3px; border-right: 1px solid #a3c0e6; text-align: left; white-space: nowrap; overflow: hidden; }
th { background: linear-gradient(#e4f0ff, #b8d6fb 45%, #a4cafa 50%, #b5d6fc); font-weight: 700; color: #14141e; }
.sorted { background: linear-gradient(#fddca7, #fbb75a 50%, #fccb79); border-right-color: #d9a34f; }
.sorted::after { content: ''; float: right; margin: 3px 1px 0 0; border: 3px solid transparent; border-top: 0; border-bottom: 4px solid #111; }
.filters td { height: 15px; background: #ffffdf; border-right-color: #d9dcd5; }
td.mark, .filters td.mark { padding: 0; background: linear-gradient(#dbe9fc, #b4d2f8); border: 1px solid #9fc0ec; }
.selected td { background: #77abdf; color: #fff; border-right-color: #cfe1f4; }
.center { text-align: center; }
.center svg { margin: 0 auto; }
.right { text-align: right; }
.pointer { display: block; width: 0; margin-left: 4px; border: 3px solid transparent; border-left: 4px solid #000; border-right: 0; }
.vbar { display: grid; grid-template-rows: 12px 1fr 12px; justify-items: center; align-items: center; background: #f0f0f0; }
.vbar .thumb { align-self: end; width: 10px; height: 59px; margin-bottom: 32px; border: 1px solid #9b9b9b; border-radius: 1px; background: repeating-linear-gradient(#555 0 1px, transparent 1px 2px) center / 4px 5px no-repeat, linear-gradient(90deg, #f8f8f8, #e3e3e4 50%, #c4c4c8); }
.bottom-tabs { display: flex; flex: none; height: 15px; padding: 0 1px 1px 0; border-top: 1px solid #a5a5a5; background: #fff; }
.bottom-tabs button { padding: 0 3px; border-right: 1px solid #a5a5a5; }
.bottom-tabs .active { margin-top: -1px; background: #fff; border-bottom: 1px solid #a5a5a5; }
.filler { width: 120px; margin-left: auto; background: #f0f0f0; }

.taskbar { display: flex; align-items: center; border-top: 1px solid #3c86cf; background: linear-gradient(56deg, transparent 84%, #4b86cc 86%, transparent 88%), linear-gradient(90deg, #1b5591, #1e60a9 14%, #0558b5 18%, #0860c0 60%, #0a55aa 85%, #1a4a88); }
.start { width: 39px; padding-left: 5px; }
.pin { justify-content: center; width: 41px; height: 27px; }
.start + .pin { padding-left: 8px; }
.pin.running { border: 1px solid #7fb0e4; border-top-color: #5e93cd; background: linear-gradient(135deg, #4d86c4, #5b94d2 60%, #2f6fb7); }
.tray { display: flex; align-items: center; gap: 6px; margin: 0 -2px 0 auto; color: #fff; font: 9px/12px 'Liberation Sans', sans-serif; }
.chevron { margin: 0 2px 0 5px; border: 3px solid transparent; border-top: 0; border-bottom: 4px solid #fff; }
</style>
